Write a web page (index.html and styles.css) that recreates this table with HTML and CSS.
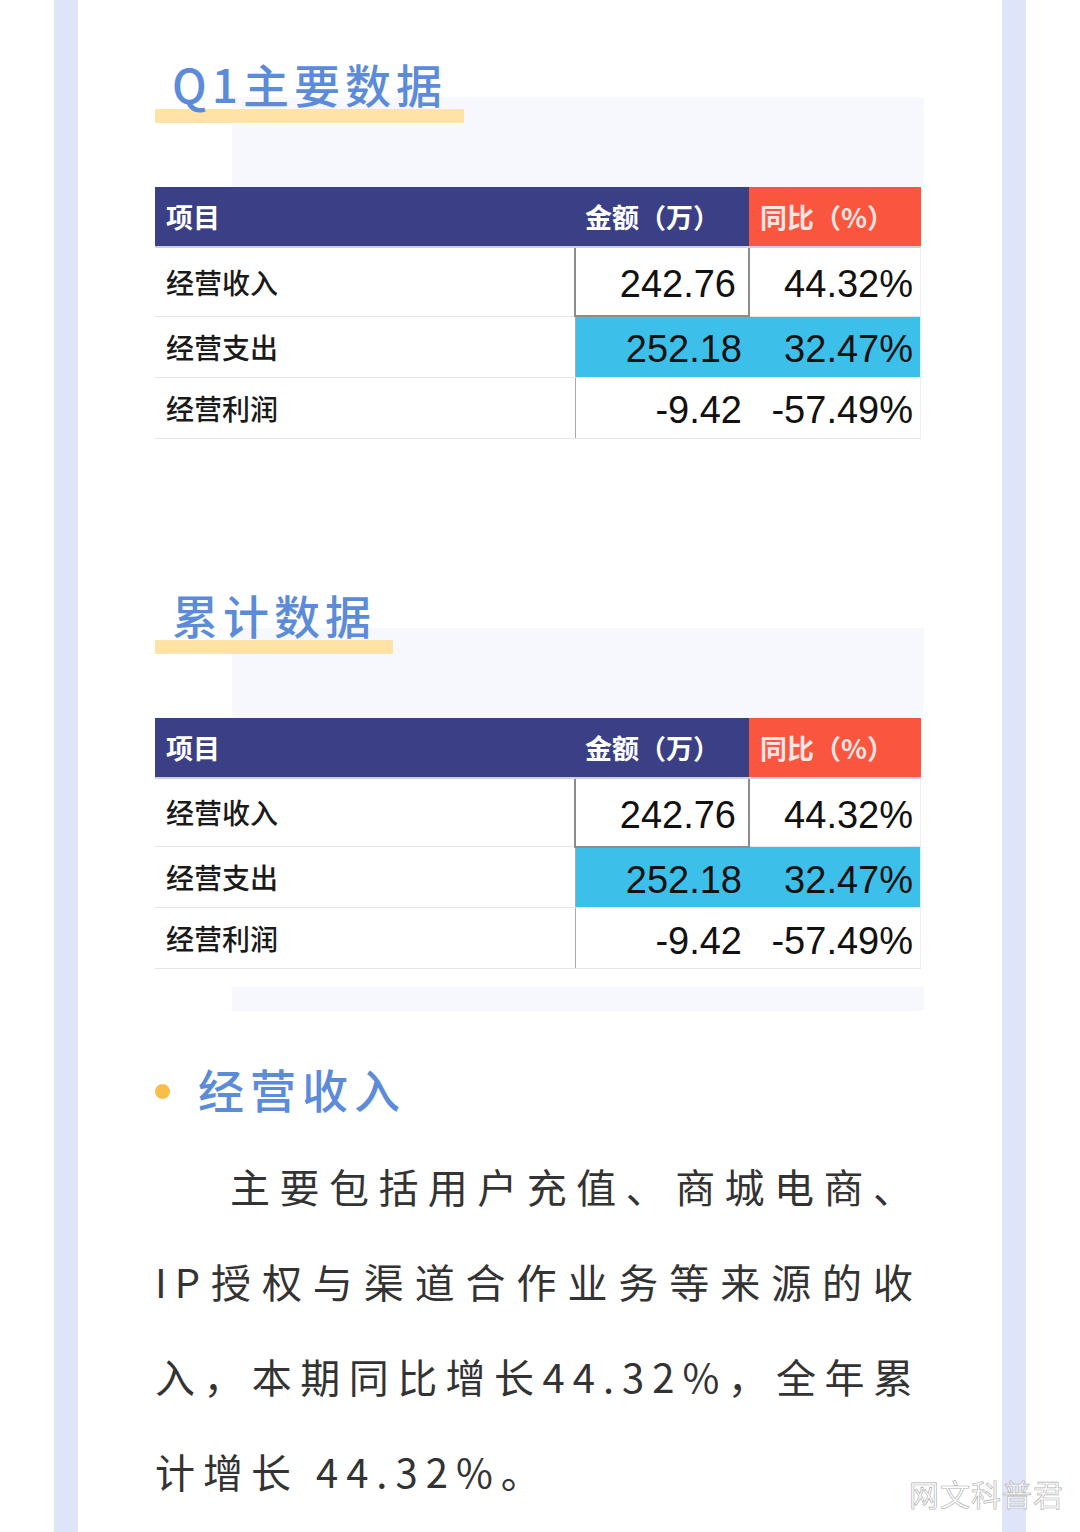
FILE: index.html
```html
<!DOCTYPE html>
<html lang="zh-CN">
<head>
<meta charset="utf-8">
<title>Q1主要数据</title>
<link rel="stylesheet" href="styles.css">
</head>
<body>
<div class="frame">
  <section class="data-section">
    <div class="title-wrap"><h2 class="title">Q1主要数据</h2></div>
    <div class="deco"></div>
    <table class="data-table">
      <thead>
        <tr><th class="c1">项目</th><th class="c2">金额（万）</th><th class="c3">同比（%）</th></tr>
      </thead>
      <tbody>
        <tr class="r1"><td class="label">经营收入</td><td class="num amt selected">242.76</td><td class="num pct">44.32%</td></tr>
        <tr class="r2 hl"><td class="label">经营支出</td><td class="num amt">252.18</td><td class="num pct">32.47%</td></tr>
        <tr class="r3"><td class="label">经营利润</td><td class="num amt">-9.42</td><td class="num pct">-57.49%</td></tr>
      </tbody>
    </table>
  </section>

  <section class="data-section second">
    <div class="title-wrap"><h2 class="title">累计数据</h2></div>
    <div class="deco"></div>
    <table class="data-table">
      <thead>
        <tr><th class="c1">项目</th><th class="c2">金额（万）</th><th class="c3">同比（%）</th></tr>
      </thead>
      <tbody>
        <tr class="r1"><td class="label">经营收入</td><td class="num amt selected">242.76</td><td class="num pct">44.32%</td></tr>
        <tr class="r2 hl"><td class="label">经营支出</td><td class="num amt">252.18</td><td class="num pct">32.47%</td></tr>
        <tr class="r3"><td class="label">经营利润</td><td class="num amt">-9.42</td><td class="num pct">-57.49%</td></tr>
      </tbody>
    </table>
    <div class="deco deco-bottom"></div>
  </section>

  <section class="text-section">
    <h3 class="heading"><span class="dot"></span><span class="heading-text">经营收入</span></h3>
    <p class="para">主要包括用户充值、商城电商、IP授权与渠道合作业务等来源的收入，本期同比增长44.32%，全年累计增长 44.32%。</p>
  </section>
</div>
<div class="watermark">网文科普君</div>
</body>
</html>
```

FILE: styles.css
```css
html, body {
  margin: 0;
  padding: 0;
}
body {
  width: 1080px;
  height: 1532px;
  overflow: hidden;
  background: #ffffff;
  position: relative;
  font-family: "Noto Sans CJK SC", "Noto Sans", sans-serif;
}
.frame {
  box-sizing: border-box;
  margin: 0 54px;
  height: 1532px;
  border-left: 24px solid #dfe5f8;
  border-right: 24px solid #dfe5f8;
  padding: 60px 81px 0 77px;
}
.data-section.second {
  margin-top: 152px;
}
.title-wrap {
  display: flex;
  height: 63px;
}
.title {
  margin: 0;
  font-size: 46px;
  line-height: 46px;
  font-weight: 500;
  letter-spacing: 5px;
  color: #5b8bd9;
  padding: 0 17px 17px 17px;
  background: linear-gradient(#ffe2a5, #ffe2a5) left bottom / 100% 14px no-repeat;
}
.deco {
  margin: -26px -3px 0 77px;
  height: 90px;
  background: #f6f8fd;
}
.deco-bottom {
  margin-top: 18px;
  height: 24px;
}
.data-table {
  width: 766px;
  border-collapse: collapse;
  table-layout: fixed;
}
.data-table th {
  box-sizing: border-box;
  height: 60px;
  padding: 0 0 0 11px;
  text-align: left;
  font-size: 27px;
  font-weight: 700;
  color: #ffffff;
  background: #3a3f86;
  border-bottom: 2px solid #cdd0e3;
}
.data-table th.c1 { width: 420px; }
.data-table th.c2 { width: 174px; padding-left: 10px; }
.data-table th.c3 {
  background: #f9553f;
  color: #ffe6e2;
}
.data-table td {
  box-sizing: border-box;
  padding: 0;
  border-bottom: 1px solid #e6e6e6;
  vertical-align: middle;
}
.data-table tr.r1 td { height: 69px; }
.data-table tr.r2 td { height: 61px; }
.data-table tr.r3 td { height: 61px; }
.label {
  padding-left: 11px !important;
  font-size: 28px;
  line-height: 40px;
  font-weight: 500;
  color: #1a1a1a;
}
.num {
  font-family: "Liberation Sans", Arial, sans-serif;
  font-size: 38px;
  line-height: 40px;
  color: #111111;
  text-align: right;
  padding-top: 5px !important;
}
.amt {
  padding-right: 7px !important;
  border-left: 1px solid #a9a9a9;
}
.pct {
  padding-right: 7px !important;
  border-right: 1px solid #eeeeee;
}
.amt.selected {
  border: 2px solid #8c8c8c;
  padding-right: 12px !important;
}
.hl td.num {
  background: #3cbfe9;
}
.text-section {
  margin-top: 54px;
}
.heading {
  margin: 0;
  display: flex;
  align-items: center;
  height: 46px;
  font-weight: 500;
}
.dot {
  width: 15px;
  height: 15px;
  border-radius: 50%;
  background: #f9bd4a;
  margin: 6px 28px 0 0;
  flex: none;
}
.heading-text {
  font-size: 46px;
  line-height: 46px;
  letter-spacing: 6px;
  color: #5b8bd9;
}
.para {
  margin: 28px 0 0;
  font-size: 40px;
  line-height: 95px;
  letter-spacing: 8px;
  text-indent: 75px;
  text-align: justify;
  color: #333333;
}
.watermark {
  position: absolute;
  right: 16px;
  bottom: 17px;
  font-size: 30px;
  letter-spacing: 1px;
  color: #ffffff;
  -webkit-text-stroke: 0.7px #b4b4b4;
  font-family: "Noto Sans CJK SC", sans-serif;
}
```
